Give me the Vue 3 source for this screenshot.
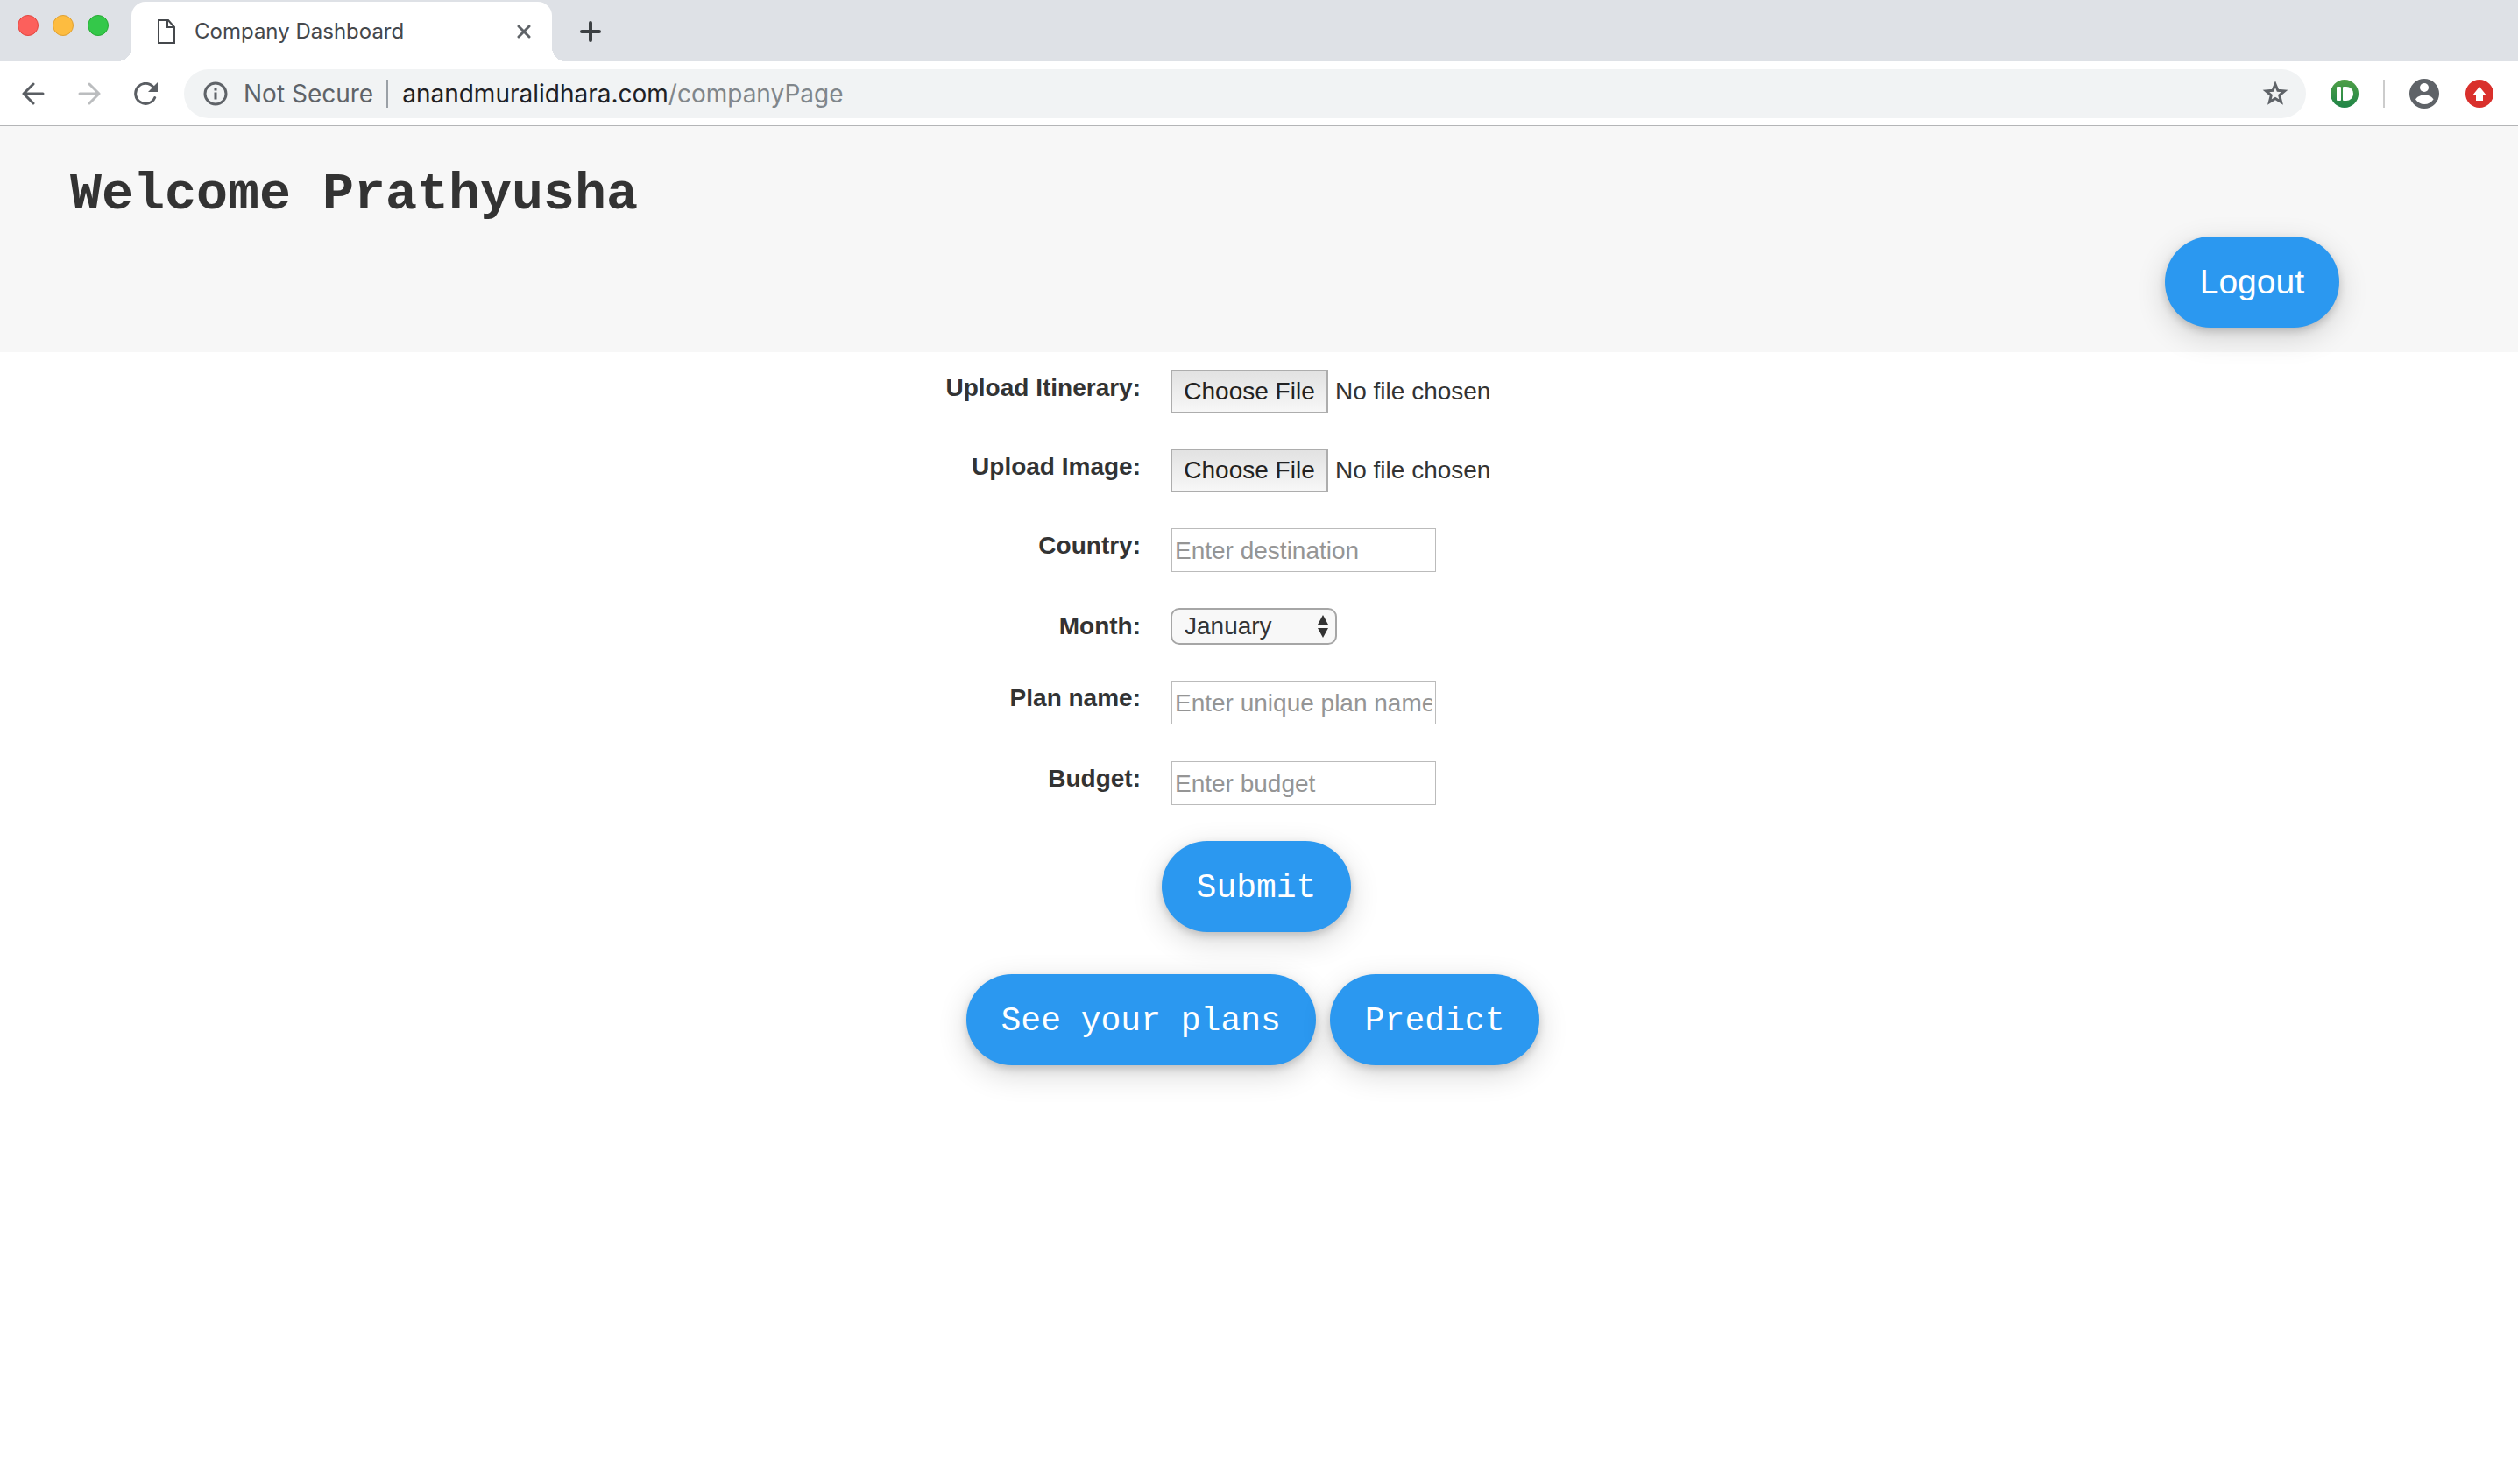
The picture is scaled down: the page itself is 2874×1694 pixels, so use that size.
<script setup>
import { ref } from 'vue'

const months = ['January', 'February', 'March', 'April', 'May', 'June', 'July', 'August', 'September', 'October', 'November', 'December']
const month = ref('January')
const country = ref('')
const planName = ref('')
const budget = ref('')
</script>

<template>
  <div class="window">
    <div class="tab-strip">
      <div class="lights">
        <span class="light red"></span>
        <span class="light amber"></span>
        <span class="light green"></span>
      </div>
      <div class="tab">
        <svg class="doc" width="20" height="28" viewBox="0 0 20 28" fill="none" stroke="#45484c" stroke-width="2">
          <path d="M1 1H12L19 9V27H1Z" /><path d="M11 1V9H19" />
        </svg>
        <span class="tab-title">Company Dashboard</span>
        <button class="plain close" type="button" aria-label="Close tab">
          <svg width="16" height="16" viewBox="0 0 16 16" stroke="#5f6368" stroke-width="3" stroke-linecap="round">
            <path d="M2 2L14 14M14 2L2 14" />
          </svg>
        </button>
      </div>
      <button class="plain" type="button" aria-label="New tab">
        <svg width="24" height="24" viewBox="0 0 24 24" stroke="#3c4043" stroke-width="4" stroke-linecap="round">
          <path d="M12 2V22M2 12H22" />
        </svg>
      </button>
    </div>

    <div class="toolbar">
      <div class="nav">
        <button class="plain" type="button" aria-label="Back">
          <svg width="26" height="26" viewBox="0 0 26 26" fill="none" stroke="#5a5e63" stroke-width="3" stroke-linecap="round" stroke-linejoin="round">
            <path d="M24 13H2M13 2L2 13L13 24" />
          </svg>
        </button>
        <button class="plain" type="button" aria-label="Forward">
          <svg width="26" height="26" viewBox="0 0 26 26" fill="none" stroke="#bbbdbf" stroke-width="3" stroke-linecap="round" stroke-linejoin="round">
            <path d="M2 13H24M13 2L24 13L13 24" />
          </svg>
        </button>
        <button class="plain" type="button" aria-label="Reload">
          <svg width="28" height="26" viewBox="0 0 28 26">
            <path d="M22 5.500A11.500 11.500 0 1 0 23.700 17.500" fill="none" stroke="#5a5e63" stroke-width="3" stroke-linecap="round" />
            <path d="M27 0V11H16Z" fill="#5a5e63" />
          </svg>
        </button>
      </div>
      <div class="address">
        <svg width="28" height="28" viewBox="0 0 28 28">
          <circle cx="14" cy="14" r="12" fill="none" stroke="#5f6368" stroke-width="3" />
          <path d="M12.5 7.5h3v3h-3zM12.5 12.5h3v8h-3z" fill="#5f6368" />
        </svg>
        <span class="security">Not Secure</span>
        <span class="divider"></span>
        <span class="url">anandmuralidhara.com<span class="path">/companyPage</span></span>
        <svg class="star" width="30" height="30" viewBox="0 0 30 30" fill="none" stroke="#5f6368" stroke-width="3">
          <path d="M15 4.2L17.9 11.3L25.6 11.9L19.7 16.9L21.6 24.5L15 20.4L8.4 24.5L10.3 16.9L4.4 11.9L12.1 11.3Z" />
        </svg>
      </div>
      <div class="extensions">
        <svg width="32" height="32" viewBox="0 0 32 32">
          <defs><linearGradient id="leaf" x1="0" y1="0" x2="0" y2="1"><stop offset="0" stop-color="#4f9f47" /><stop offset="1" stop-color="#1f8447" /></linearGradient></defs>
          <circle cx="16" cy="16" r="16" fill="url(#leaf)" />
          <rect x="7" y="8" width="5" height="16" rx="1" fill="#fff" />
          <path d="M15 8H18a8 8 0 0 1 0 16H15a1 1 0 0 1-1-1V9a1 1 0 0 1 1-1Z" fill="#fff" />
        </svg>
        <span class="bar"></span>
        <svg width="36" height="36" viewBox="0 -1 36 36">
          <circle cx="17" cy="17" r="17" fill="#5f6368" />
          <circle cx="17" cy="10" r="5" fill="#fff" />
          <path d="M7 23.5C8.500 20.500 13 18.500 17.500 18.500S26 20.500 27.500 23.500C25 27 21.500 29 17.200 29S9.500 27 7 23.500Z" fill="#fff" />
        </svg>
        <svg width="32" height="32" viewBox="0 0 32 32">
          <circle cx="16" cy="16" r="16" fill="#d9302c" />
          <path d="M16 8L24 18H20V24H12V18H8Z" fill="#fff" />
        </svg>
      </div>
    </div>

    <header class="banner">
      <h1>Welcome Prathyusha</h1>
      <button class="pill logout" type="button">Logout</button>
    </header>

    <main>
      <form @submit.prevent>
        <div class="row">
          <label for="itinerary">Upload Itinerary:</label>
          <input id="itinerary" type="file">
        </div>
        <div class="row">
          <label for="image">Upload Image:</label>
          <input id="image" type="file">
        </div>
        <div class="row">
          <label for="country">Country:</label>
          <div class="control">
            <input id="country" v-model="country" class="field" type="text" placeholder="Enter destination">
          </div>
        </div>
        <div class="row">
          <label for="month">Month:</label>
          <div class="control">
            <select id="month" v-model="month">
              <option v-for="m in months" :key="m">{{ m }}</option>
            </select>
            <svg class="arrows" width="12" height="26" viewBox="0 0 12 26" fill="#333"><path d="M6 0L12 11H0ZM6 26L12 15H0Z" /></svg>
          </div>
        </div>
        <div class="row">
          <label for="plan">Plan name:</label>
          <div class="control">
            <input id="plan" v-model="planName" class="field" type="text" placeholder="Enter unique plan name">
          </div>
        </div>
        <div class="row">
          <label for="budget">Budget:</label>
          <div class="control">
            <input id="budget" v-model="budget" class="field" type="text" placeholder="Enter budget">
          </div>
        </div>
        <div class="submit">
          <button class="pill" type="submit">Submit</button>
        </div>
      </form>
      <div class="actions">
        <button class="pill" type="button">See your plans</button>
        <button class="pill" type="button">Predict</button>
      </div>
    </main>
  </div>
</template>

<style>
body {
  margin: 0;
  background: #fff;
}
</style>

<style scoped>
.window {
  min-height: 100vh;
  font-family: "Liberation Sans", Arial, sans-serif;
  font-size: 28px;
  line-height: 40px;
  color: #333;
}
.window * {
  box-sizing: border-box;
}
svg {
  display: block;
  flex: none;
}
.plain {
  padding: 0;
  border: 0;
  background: none;
}
.tab-strip {
  display: flex;
  align-items: center;
  height: 70px;
  padding-top: 2px;
  background: #dee1e6;
}
.lights {
  display: flex;
  gap: 16px;
  width: 150px;
  padding: 0 0 14px 20px;
}
.light {
  width: 24px;
  height: 24px;
  border: 1px solid #e2463f;
  border-radius: 50%;
  background: #fc605c;
}
.amber {
  border-color: #dfa032;
  background: #fdbc40;
}
.green {
  border-color: #27a934;
  background: #34c84a;
}
.tab {
  position: relative;
  display: flex;
  align-items: center;
  width: 480px;
  height: 68px;
  margin-right: 32px;
  padding: 0 24px 0 30px;
  border-radius: 16px 16px 0 0;
  background: #fff;
}
.tab::before,
.tab::after {
  content: "";
  position: absolute;
  bottom: 0;
  width: 16px;
  height: 16px;
}
.tab::before {
  left: -16px;
  background: radial-gradient(circle at 0 0, transparent 16px, #fff 16px);
}
.tab::after {
  right: -16px;
  background: radial-gradient(circle at 100% 0, transparent 16px, #fff 16px);
}
.tab-title {
  margin-left: 22px;
  font-family: Inter, sans-serif;
  font-size: 24px;
  color: #45484c;
}
.close {
  margin-left: auto;
}
.toolbar {
  display: flex;
  align-items: center;
  height: 74px;
  padding-right: 28px;
  border-bottom: 1px solid #b4b5b7;
  background: #fff;
  font-family: Inter, sans-serif;
}
.nav {
  display: flex;
  gap: 38px;
  width: 210px;
  padding-left: 25px;
}
.address {
  display: flex;
  flex: 1;
  align-items: center;
  height: 56px;
  padding: 0 20px 0 22px;
  border-radius: 28px;
  background: #f1f3f4;
}
.security {
  margin-left: 18px;
  color: #5f6368;
}
.divider {
  width: 2px;
  height: 32px;
  margin: 0 16px 0 15px;
  background: #9aa0a6;
}
.url {
  color: #202124;
}
.path {
  color: #80868b;
}
.star {
  margin-left: auto;
}
.extensions {
  display: flex;
  align-items: center;
  gap: 28px;
  margin-left: 28px;
}
.bar {
  width: 2px;
  height: 32px;
  background: #ccc;
}
.banner {
  display: flex;
  flex-direction: column;
  height: 258px;
  padding: 42px 204px 28px 80px;
  background: #f7f7f7;
}
h1 {
  margin: 0;
  font-family: "Liberation Mono", "Courier New", monospace;
  font-size: 60px;
  line-height: 72px;
}
.pill {
  height: 104px;
  padding: 4px 40px 0;
  border: 0;
  border-radius: 52px;
  background: #2b98f0;
  color: #fff;
  font: 38px/40px "Liberation Mono", "Courier New", monospace;
  box-shadow: 0 4px 10px rgba(0, 0, 0, 0.16), 0 10px 34px rgba(0, 0, 0, 0.16);
}
.logout {
  align-self: flex-end;
  margin-top: 12px;
  padding: 0 40px;
  font: 39px/40px "Liberation Sans", Arial, sans-serif;
}
main {
  display: flex;
  flex-direction: column;
  gap: 48px;
  padding-top: 20px;
}
form {
  display: flex;
  flex-direction: column;
  gap: 40px;
}
.row {
  display: flex;
  justify-content: center;
  align-items: flex-start;
  gap: 34px;
}
label {
  width: 238px;
  margin-bottom: -2px;
  line-height: 42px;
  font-weight: bold;
  text-align: right;
}
.row input,
select {
  font: 28px/40px "Liberation Sans", Arial, sans-serif;
  color: #333;
}
input[type="file"] {
  width: 474px;
  height: 50px;
}
input::file-selector-button {
  height: 50px;
  width: 180px;
  margin: 0 8px 0 0;
  padding: 0;
  border: 2px solid #adadad;
  border-radius: 0;
  background: linear-gradient(#e2e2e2, #f7f7f7);
  color: #222;
  font: 28px/40px "Liberation Sans", Arial, sans-serif;
}
.control {
  position: relative;
  width: 474px;
}
.field {
  display: block;
  width: 302px;
  height: 50px;
  margin: 1px;
  padding: 2px 4px 0 3px;
  border: 1px solid #bbb;
  background: #fff;
}
.field::placeholder {
  color: #959595;
}
select {
  display: block;
  appearance: none;
  width: 190px;
  height: 42px;
  padding: 0 14px;
  border: 2px solid #a6a6a6;
  border-radius: 10px;
  background: #f8f8f8;
}
.row select {
  line-height: 36px;
}
.arrows {
  position: absolute;
  top: 8px;
  left: 168px;
  pointer-events: none;
}
.submit,
.actions {
  display: flex;
  justify-content: center;
  gap: 16px;
  padding-right: 6px;
}
.actions {
  padding-right: 14px;
}
</style>
